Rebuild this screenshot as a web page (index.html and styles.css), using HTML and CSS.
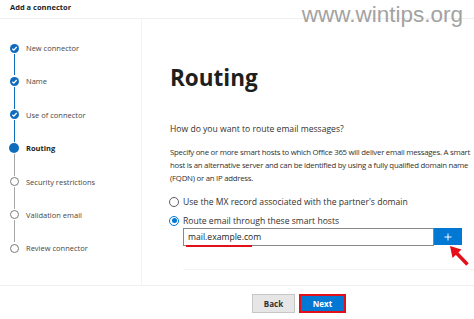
FILE: index.html
```html
<!DOCTYPE html>
<html lang="en">
<head>
    <meta charset="UTF-8">
    <meta name="viewport" content="width=device-width, initial-scale=1.0">
    <title>Add a connector</title>
    <link rel="stylesheet" href="styles.css">
</head>
<body>
    <header class="topbar">
        <h1>Add a connector</h1>
    </header>
    <div class="watermark">www.wintips.org</div>

    <div class="wizard">
        <nav class="steps">
            <div class="step done">
                <div class="marker">
                    <span class="dot"><svg viewBox="0 0 10 10"><path d="M2.6 5.2 L4.3 6.8 L7.4 3.4" /></svg></span>
                    <span class="line"></span>
                </div>
                <span class="label">New connector</span>
            </div>
            <div class="step done">
                <div class="marker">
                    <span class="dot"><svg viewBox="0 0 10 10"><path d="M2.6 5.2 L4.3 6.8 L7.4 3.4" /></svg></span>
                    <span class="line"></span>
                </div>
                <span class="label">Name</span>
            </div>
            <div class="step done">
                <div class="marker">
                    <span class="dot"><svg viewBox="0 0 10 10"><path d="M2.6 5.2 L4.3 6.8 L7.4 3.4" /></svg></span>
                    <span class="line"></span>
                </div>
                <span class="label">Use of connector</span>
            </div>
            <div class="step current">
                <div class="marker">
                    <span class="dot"></span>
                    <span class="line"></span>
                </div>
                <span class="label">Routing</span>
            </div>
            <div class="step">
                <div class="marker">
                    <span class="dot"></span>
                    <span class="line"></span>
                </div>
                <span class="label">Security restrictions</span>
            </div>
            <div class="step">
                <div class="marker">
                    <span class="dot"></span>
                    <span class="line"></span>
                </div>
                <span class="label">Validation email</span>
            </div>
            <div class="step last">
                <div class="marker">
                    <span class="dot"></span>
                </div>
                <span class="label">Review connector</span>
            </div>
        </nav>

        <main class="content">
            <h2>Routing</h2>
            <p class="question">How do you want to route email messages?</p>
            <p class="desc">Specify one or more smart hosts to which Office 365 will deliver email messages. A smart host is an alternative server and can be identified by using a fully qualified domain name (FQDN) or an IP address.</p>

            <label class="radio"><span class="circle"></span>Use the MX record associated with the partner's domain</label>
            <label class="radio checked"><span class="circle"></span>Route email through these smart hosts</label>

            <div class="hosts">
                <div class="host-field">
                    <span class="host-input">mail.example.com</span>
                    <button class="add" type="button">
                        <svg viewBox="0 0 10 10"><path d="M5 1.5 V8.5 M1.5 5 H8.5" /></svg>
                    </button>
                    <span class="mark"></span>
                    <svg class="arrow" viewBox="0 0 24 24">
                        <path d="M10 9.5 L21.5 21.5" />
                        <polygon points="4,3 15.5,6.5 6.5,15" />
                    </svg>
                </div>
            </div>
        </main>
    </div>

    <footer class="actions">
        <button class="btn back" type="button">Back</button>
        <button class="btn next" type="button">Next</button>
    </footer>
</body>
</html>
```

FILE: styles.css
```css
body {
    margin: 0;
    font-family: 'Open Sans', sans-serif;
    color: #323130;
    background-color: #fff;
    height: 319px;
    overflow: hidden;
    position: relative;
}
.topbar {
    height: 19px;
    border-bottom: 1px solid #f0f0f0;
    padding: 2px 0 0 10px;
    box-sizing: border-box;
}
h1 {
    margin: 0;
    font-size: 7.5px;
    line-height: 10px;
    font-weight: 700;
    color: #201f1e;
}
.watermark {
    position: absolute;
    top: 4px;
    right: 11px;
    font-family: 'Liberation Sans', Arial, sans-serif;
    font-size: 22.5px;
    line-height: 22px;
    color: #a2a2a2;
}
.wizard {
    display: flex;
    height: 266px;
    border-bottom: 1px solid #f0f0f0;
}
.steps {
    width: 142px;
    border-right: 1px solid #f3f3f3;
    padding: 24px 0 0 9px;
    box-sizing: border-box;
    flex-shrink: 0;
}
.step {
    display: flex;
    gap: 7px;
    height: 33.4px;
}
.marker {
    width: 10px;
    display: flex;
    flex-direction: column;
    align-items: center;
}
.dot {
    width: 9px;
    height: 9px;
    border-radius: 50%;
    box-sizing: border-box;
    border: 1px solid #7a7a7a;
    background-color: #fff;
    display: flex;
    flex-shrink: 0;
    margin-top: 0.5px;
}
.dot svg {
    width: 100%;
    height: 100%;
    fill: none;
    stroke: #fff;
    stroke-width: 1.5;
}
.line {
    flex: 1;
    width: 1px;
    background-color: #a6a6a6;
    margin: 1px 0;
}
.step.done .dot {
    background-color: #0f6cbd;
    border: none;
}
.step.done .line {
    background-color: #0f6cbd;
}
.step.current .dot {
    width: 10px;
    height: 10px;
    margin-top: 0;
    background-color: #0f6cbd;
    border: none;
}
.label {
    font-size: 7.5px;
    line-height: 10px;
    color: #484644;
}
.step.current .label {
    font-weight: 700;
    color: #201f1e;
}
.content {
    flex: 1;
    padding-left: 28px;
    overflow: hidden;
    min-width: 0;
}
h2 {
    margin: 45px 0 0;
    font-size: 22.5px;
    line-height: 27px;
    font-weight: 700;
    color: #201f1e;
}
.question {
    margin: 32px 0 0;
    font-size: 8.6px;
    line-height: 13px;
}
.desc {
    margin: 10px 0 0;
    width: 312px;
    font-size: 7.8px;
    letter-spacing: -0.25px;
    line-height: 13px;
}
.radio {
    display: flex;
    align-items: center;
    gap: 4px;
    height: 13px;
    margin-top: 10px;
    font-size: 8.6px;
}
.radio + .radio {
    margin-top: 6px;
}
.circle {
    width: 10px;
    height: 10px;
    box-sizing: border-box;
    border-radius: 50%;
    border: 1px solid #605e5c;
    margin-left: -1px;
    display: flex;
    align-items: center;
    justify-content: center;
}
.radio.checked .circle {
    border-color: #0078d4;
}
.radio.checked .circle::after {
    content: '';
    width: 5px;
    height: 5px;
    border-radius: 50%;
    background-color: #0078d4;
}
.hosts {
    margin: 1px 0 0 13px;
    height: 41px;
    border-bottom: 1px solid #f4f4f4;
}
.host-field {
    display: flex;
    width: 279px;
    height: 18px;
    position: relative;
}
.host-input {
    flex: 1;
    box-sizing: border-box;
    border: 1px solid #8a8886;
    padding-left: 4px;
    font-size: 8.6px;
    line-height: 16px;
    color: #201f1e;
}
.add {
    width: 28px;
    height: 17px;
    border: none;
    padding: 0;
    background-color: #0078d4;
    display: flex;
    align-items: center;
    justify-content: center;
}
.add svg {
    width: 10px;
    height: 10px;
    fill: none;
    stroke: #fff;
    stroke-width: 1;
}
.mark {
    position: absolute;
    left: 3px;
    top: 17px;
    width: 66px;
    height: 2px;
    background-color: #e3101a;
}
.arrow {
    position: absolute;
    left: 263px;
    top: 15px;
    width: 24px;
    height: 24px;
    overflow: visible;
}
.arrow path {
    stroke: #e3101a;
    stroke-width: 3.5;
}
.arrow polygon {
    fill: #e3101a;
}
.actions {
    display: flex;
    gap: 4px;
    padding: 8px 0 0 252px;
}
.btn {
    height: 19px;
    box-sizing: border-box;
    font-family: 'Open Sans', sans-serif;
    font-size: 8px;
    font-weight: 700;
    padding: 0;
}
.btn.back {
    width: 43px;
    background-color: #e6e6e6;
    border: 1px solid #c8c6c4;
    color: #323130;
}
.btn.next {
    width: 47px;
    background-color: #0078d4;
    border: 2px solid #e3101a;
    color: #fff;
}
```
